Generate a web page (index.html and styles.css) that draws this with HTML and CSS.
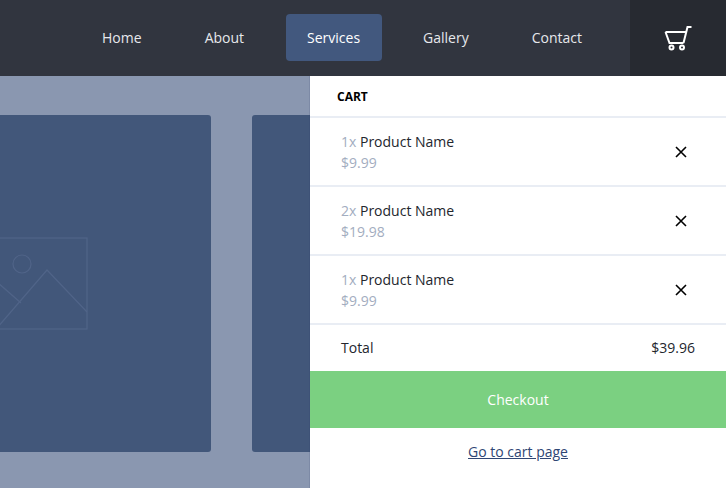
FILE: index.html
```html
<!DOCTYPE html>
<html lang="en">
<head>
<meta charset="utf-8">
<title>Cart</title>
<link rel="stylesheet" href="styles.css">
</head>
<body>
<div class="page">
  <header class="topbar">
    <nav class="nav">
      <a class="nav-link" href="#">Home</a>
      <a class="nav-link" href="#">About</a>
      <a class="nav-link active" href="#">Services</a>
      <a class="nav-link" href="#">Gallery</a>
      <a class="nav-link" href="#">Contact</a>
    </nav>
    <button class="cart-btn" aria-label="Cart">
      <svg class="cart-icon" width="28" height="26" viewBox="0 0 28 26" fill="none" stroke="#fff" stroke-width="2">
        <path d="M1.5 7H23"/>
        <path d="M1.5 7L5.5 18H19.5"/>
        <path d="M19.5 18L23.5 2H27.5"/>
        <circle cx="7.5" cy="22.5" r="2"/>
        <circle cx="18" cy="22.5" r="2"/>
      </svg>
    </button>
  </header>
  <main class="content">
    <div class="card">
      <svg class="placeholder" width="92" height="93" viewBox="0 0 92 93" fill="none" stroke="#506488" stroke-width="1.2">
        <rect x="1" y="1" width="90" height="91"/>
        <circle cx="26" cy="27" r="9"/>
        <path d="M1 91L51 33L91 75"/>
        <path d="M1 45L25 66"/>
      </svg>
    </div>
    <div class="card"></div>
  </main>
  <aside class="panel">
    <div class="panel-head">CART</div>
    <ul class="items">
      <li class="item">
        <div class="item-info">
          <div class="item-name"><span class="qty">1x</span> Product Name</div>
          <div class="price">$9.99</div>
        </div>
        <svg class="remove" width="12" height="12" viewBox="0 0 12 12" stroke="#000" stroke-width="1.6"><path d="M1 1L11 11M11 1L1 11"/></svg>
      </li>
      <li class="item">
        <div class="item-info">
          <div class="item-name"><span class="qty">2x</span> Product Name</div>
          <div class="price">$19.98</div>
        </div>
        <svg class="remove" width="12" height="12" viewBox="0 0 12 12" stroke="#000" stroke-width="1.6"><path d="M1 1L11 11M11 1L1 11"/></svg>
      </li>
      <li class="item">
        <div class="item-info">
          <div class="item-name"><span class="qty">1x</span> Product Name</div>
          <div class="price">$9.99</div>
        </div>
        <svg class="remove" width="12" height="12" viewBox="0 0 12 12" stroke="#000" stroke-width="1.6"><path d="M1 1L11 11M11 1L1 11"/></svg>
      </li>
    </ul>
    <div class="total"><span>Total</span><span>$39.96</span></div>
    <a class="checkout" href="#">Checkout</a>
    <div class="cart-link-row"><a class="cart-link" href="#">Go to cart page</a></div>
  </aside>
</div>
</body>
</html>
```
FILE: styles.css
```css
* { box-sizing: border-box; }
html, body { margin: 0; height: 100%; }
body { font-family: "Open Sans", "Noto Sans", sans-serif; font-size: 14px; overflow: hidden; }
.page { position: relative; width: 726px; height: 488px; overflow: hidden; background: #8a97b0; }
.topbar { display: flex; justify-content: flex-end; height: 76px; background: #31353f; }
.nav { display: flex; align-items: center; gap: 20px; padding: 0 26.5px 2px 0; }
.nav-link { display: flex; align-items: center; height: 47px; padding: 0 21.5px; border-radius: 4px; color: #e6e8ec; text-decoration: none; }
.nav-link.active { background: #42587e; color: #fff; }
.cart-btn { display: flex; align-items: center; justify-content: center; width: 96px; border: 0; padding: 0; background: #272a31; }
.content { display: flex; gap: 41px; padding-top: 39px; margin-left: -127px; }
.card { flex: none; display: flex; align-items: center; justify-content: center; width: 338px; height: 337px; border-radius: 3px; background: #42577a; }
.panel { position: absolute; top: 76px; right: 0; bottom: 0; width: 416px; background: #fff; color: #23262d; box-shadow: -1px 0 0 rgba(30, 50, 100, .12); }
.panel-head { display: flex; align-items: center; height: 42px; padding-left: 27px; border-bottom: 2px solid #e9edf4; font-size: 12px; font-weight: 700; color: #000; }
.items { list-style: none; margin: 0; padding: 0; }
.item { display: flex; align-items: center; justify-content: space-between; height: 69px; padding: 0 39px 0 31px; border-bottom: 2px solid #e9edf4; }
.item-name, .price { line-height: 21px; }
.qty, .price { color: #a3adc0; }
.total { display: flex; align-items: center; justify-content: space-between; height: 46px; padding: 0 31px 1px; }
.checkout { display: flex; align-items: center; justify-content: center; height: 57px; background: #7bd081; color: #fff; text-decoration: none; }
.cart-link-row { display: flex; justify-content: center; padding-top: 14px; }
.cart-link { color: #2f4674; }
```
